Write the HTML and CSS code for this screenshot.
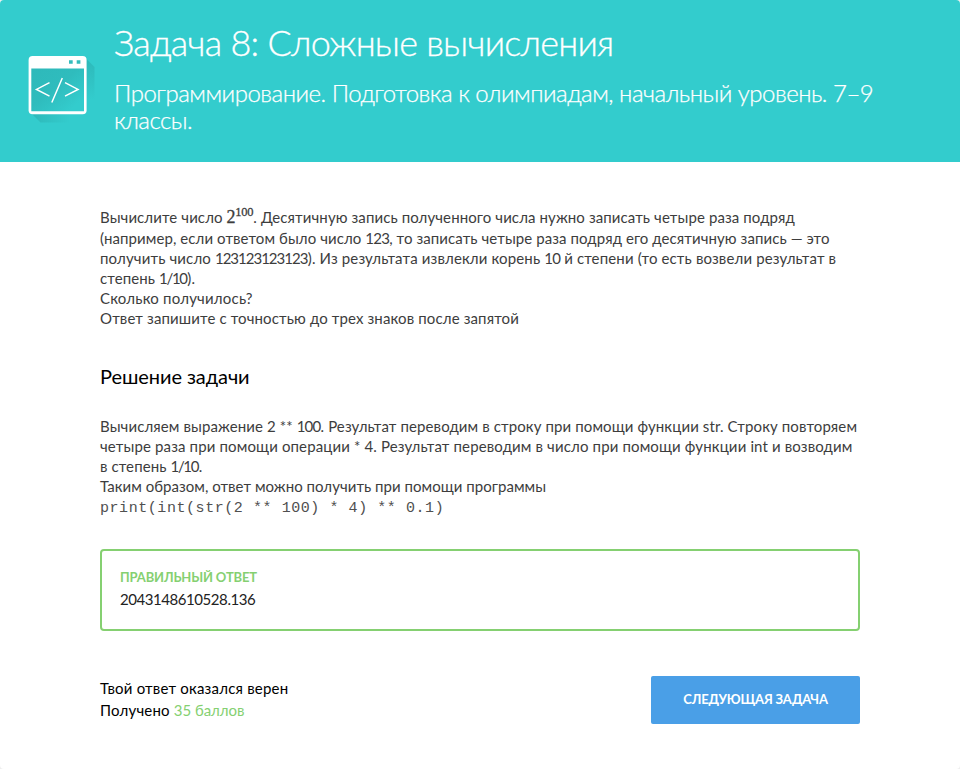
FILE: index.html
```html
<!DOCTYPE html>
<html lang="ru">
<head>
<meta charset="utf-8">
<title>Задача 8: Сложные вычисления</title>
<link rel="stylesheet" href="styles.css">
</head>
<body>
<main class="card">
  <header class="head">
    <svg class="head-icon" width="70" height="74" viewBox="0 0 70 74" aria-hidden="true">
      <defs>
        <linearGradient id="castRight" x1="0" y1="0" x2="0" y2="1"><stop offset="0.1" stop-color="#2ebabb"/><stop offset="1" stop-color="#33cccd"/></linearGradient>
        <linearGradient id="castDown" x1="0" y1="0" x2="1" y2="0"><stop offset="0.1" stop-color="#2ebabb"/><stop offset="1" stop-color="#33cccd"/></linearGradient>
        <linearGradient id="pane" x1="0" y1="0" x2="1" y2="1"><stop offset="0" stop-color="#2eb9ba"/><stop offset="0.45" stop-color="#2fbcbd"/><stop offset="0.85" stop-color="#33cccd"/></linearGradient>
      </defs>
      <path d="M59 7.500l9.500 9.500v33H59z" fill="url(#castRight)"/>
      <path d="M4 62l10.500 10.500H44V62z" fill="url(#castDown)"/>
      <rect x="2.600" y="6" width="58" height="58.200" rx="4" fill="#fff"/>
      <path d="M5.300 18.500h52.700v42.700h-52.700z" fill="url(#pane)"/>
      <path d="M43 10.300h3.700v3.500h-3.700zM50.700 10.300h3.700v3.500h-3.700z" fill="#33bcbd"/>
      <path d="M23.500 32.700L10.500 39.400L23.500 46.200M39 32.700L52 39.400L39 46.200M36.300 28L25.800 52.500" fill="none" stroke="#fff" stroke-width="1.500"/>
    </svg>
    <div class="head-text">
      <h1 class="title">Задача 8: Сложные вычисления</h1>
      <p class="course"><span class="line">Программирование. Подготовка к олимпиадам, начальный уровень. 7–9</span><span class="line">классы.</span></p>
    </div>
  </header>
  <section class="content">
    <div class="text statement">
      <span class="line first">Вычислите число <span class="math">2<sup>100</sup></span>. Десятичную запись полученного числа нужно записать четыре раза подряд</span>
      <span class="line s2">(например, если ответом было число <span class="num">123</span>, то записать четыре раза подряд его десятичную запись — это</span>
      <span class="line">получить число <span class="num long">123123123123</span>). Из результата извлекли корень <span class="num">10</span> й степени (то есть возвели результат в</span>
      <span class="line">степень <span class="num tight">1/10</span>).</span>
      <span class="line s5">Сколько получилось?</span>
      <span class="line s6">Ответ запишите с точностью до трех знаков после запятой</span>
    </div>
    <h2 class="subtitle">Решение задачи</h2>
    <div class="text solution">
      <span class="line r1">Вычисляем выражение 2 ** <span class="num">100</span>. Результат переводим в строку при помощи функции str. Строку повторяем</span>
      <span class="line r2">четыре раза при помощи операции * 4. Результат переводим в число при помощи функции int и возводим</span>
      <span class="line">в степень <span class="num tight">1/10</span>.</span>
      <span class="line r4">Таким образом, ответ можно получить при помощи программы</span>
      <code class="code">print(int(str(2 ** 100) * 4) ** 0.1)</code>
    </div>
    <div class="answer">
      <div class="answer-label">Правильный ответ</div>
      <div class="answer-value">2043148610528.136</div>
    </div>
    <footer class="foot">
      <div class="result"><span class="line">Твой ответ оказался верен</span><span class="line">Получено <span class="points">35 баллов</span></span></div>
      <button class="next" type="button">Следующая задача</button>
    </footer>
  </section>
</main>
</body>
</html>
```
FILE: styles.css
```css
* { box-sizing: border-box; }
body { margin: 0; background: #eee; font-family: Lato, sans-serif; color: #000; }
.card { height: 769px; border-radius: 4px; overflow: hidden; background: #fff; }
.head { display: flex; height: 162px; padding: 19px 26px; background: #33cccd; color: #fff; }
.head-icon { flex: none; margin-top: 31px; }
.head-text { padding-left: 18px; }
.title { margin: 0; font-size: 36px; line-height: 46px; font-weight: 300; letter-spacing: -.76px; white-space: nowrap; -webkit-text-stroke: .3px; }
.course { margin: 14px 0 0; font-size: 24px; line-height: 27px; font-weight: 300; letter-spacing: -.5px; -webkit-text-stroke: .25px; }
.line { display: block; white-space: nowrap; }
.content { padding: 45px 100px 0; }
.text { font-size: 15px; line-height: 20px; color: #3d3d3d; letter-spacing: .1px; }
.num { letter-spacing: -.75px; }
.long { letter-spacing: -1px; margin-right: .4px; }
.tight { letter-spacing: -1.3px; margin-right: .6px; }
.first { line-height: 21px; }
.s2 { letter-spacing: .085px; }
.statement .line:nth-child(3) { letter-spacing: .14px; }
.s5 { letter-spacing: .2px; }
.s6 { letter-spacing: .125px; }
.r1 { letter-spacing: .11px; }
.r2 { letter-spacing: .135px; }
.r4 { letter-spacing: .04px; }
.math { font-family: "Liberation Serif", serif; font-size: 18px; line-height: 0; letter-spacing: -.25px; -webkit-text-stroke: .3px; }
.math sup { font-size: 12.5px; line-height: 0; vertical-align: 7px; }
.subtitle { margin: 35px 0 27px; font-size: 20px; line-height: 26px; font-weight: 400; letter-spacing: -.07px; }
.code { display: block; padding-top: 2px; font: 15px/22px "Liberation Mono", monospace; letter-spacing: .56px; color: #505050; }
.answer { height: 82px; margin-top: 29px; padding: 16px 18px; border: 2px solid #85d071; border-radius: 4px; }
.answer-label { font-size: 13px; line-height: 20px; font-weight: 700; letter-spacing: -.15px; color: #85d071; text-transform: uppercase; }
.answer-value { font-size: 15px; line-height: 25px; letter-spacing: -.44px; color: #222; }
.foot { display: flex; justify-content: space-between; margin-top: 45px; }
.result { padding-top: 1px; font-size: 15px; line-height: 22px; letter-spacing: .2px; }
.points { color: #85d071; letter-spacing: -.05px; }
.next { width: 209px; height: 48px; padding: 0 0 2px; border: 0; border-radius: 2px; background: #4a9fe7; color: #fff; font: 700 13px Lato, sans-serif; letter-spacing: -.18px; text-transform: uppercase; }
```
